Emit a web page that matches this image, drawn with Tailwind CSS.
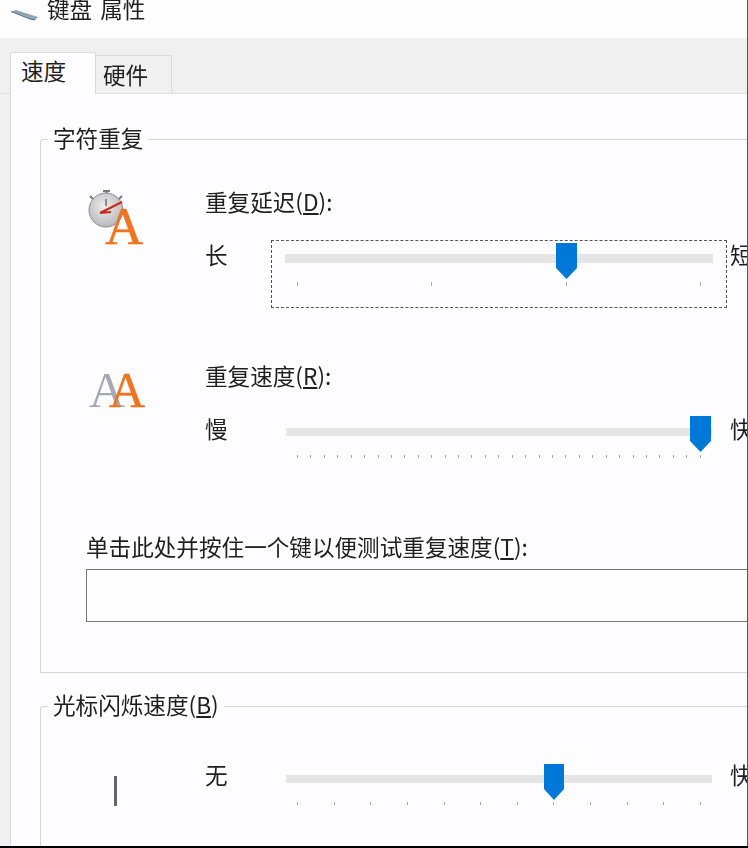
<!DOCTYPE html>
<html lang="zh-CN">
<head>
<meta charset="UTF-8">
<title>键盘 属性</title>
<script src="https://cdn.jsdelivr.net/npm/@tailwindcss/browser@4"></script>
</head>
<body class="bg-[#fdfcfe] text-[#1f1f1f] font-['Noto_Sans_CJK_SC','Noto_Sans',sans-serif] text-[22.6px]">
<div class="flex flex-col w-[748px] h-[848px] overflow-hidden">
 <div class="flex-1 min-h-0 flex blur-[0.4px]">
  <div class="flex-1 min-w-0 flex flex-col">

  <!-- Title bar -->
  <div class="h-[38px] shrink-0 flex items-start bg-[#fdfdfd] pl-[11px]">
    <svg class="mt-[9px]" width="27" height="12" viewBox="0 0 27 12">
      <path d="M0 2.5 L5 1 L27 8 L24 11 L19 10 Z" fill="#8fa6b8"/>
      <path d="M0 2.5 L19 10 L24 11" fill="none" stroke="#5f6f7c" stroke-width="1"/>
    </svg>
    <span class="ml-[9px] -mt-[6px] leading-[30px] [word-spacing:3px]">键盘 属性</span>
  </div>

  <!-- Tabs -->
  <div class="h-[56px] shrink-0 bg-[#f0f0f0] flex items-end pl-[10px] border-b border-[#dfdfdf]">
    <div class="w-[86px] h-[42px] -mb-px bg-[#fdfcfe] border border-b-0 border-[#dcdcdc] rounded-t-[2px] pl-[10px] leading-[36px] z-10">速度</div>
    <div class="w-[76px] h-[38px] bg-[#f0f0f0] border border-l-0 border-b-0 border-[#d9d9d9] rounded-tr-[2px] pl-[7px] leading-[38px]">硬件</div>
  </div>

  <div class="flex-1 flex min-h-0">
    <div class="w-[10px] bg-[#f0f0f0]"></div>

    <!-- Panel -->
    <div class="flex-1 min-w-0 overflow-hidden bg-[#fdfcfe] border-l border-[#dcdcdc] pl-[29px] pt-[45px]">

      <!-- Group: 字符重复 -->
      <div class="relative w-[760px] h-[534px] border border-r-0 border-[#d5d5d5] rounded-tl-[4px] pt-[49px]">
        <span class="absolute left-[7px] -top-[17px] px-[5px] bg-[#fdfcfe] leading-[30px]">字符重复</span>

        <div class="flex">
          <div class="w-[164px] shrink-0 pl-[46px]">
            <svg width="60" height="60" viewBox="0 0 60 60">
              <defs>
                <radialGradient id="dial" cx="45%" cy="40%" r="65%">
                  <stop offset="0" stop-color="#eeeeee"/>
                  <stop offset="1" stop-color="#b4b4b8"/>
                </radialGradient>
              </defs>
              <path d="M16 2 h7 M19.5 2 v3 M3 7 l4 4 M35 7 l-4 4" stroke="#77797e" stroke-width="2" fill="none"/>
              <circle cx="19" cy="21" r="17" fill="url(#dial)" stroke="#8c8d92" stroke-width="1"/>
              <path d="M13 24 L35 13 M13 24 L24 23" stroke="#c8281e" stroke-width="2" fill="none"/>
              <path d="M19 10 v7" stroke="#6b6b70" stroke-width="1.5"/>
              <text x="18" y="55" font-family="Liberation Serif" font-size="53" fill="#ee7420" stroke="#ee7420" stroke-width="0.5">A</text>
            </svg>
          </div>
          <div>
            <div class="h-[24px] leading-[26px]">重复延迟(<u>D</u>):</div>
            <div class="flex mt-[27px]">
              <div class="w-[66px] h-[28px] leading-[30px]">长</div>
              <div class="relative w-[456px] h-[68px] border border-dashed border-[#555] pt-[13px] px-[13px]">
                <div class="h-[9px] bg-[#e5e5e7]"></div>
                <div class="flex justify-between px-[12px] mt-[19px]">
                  <i class="w-px h-[4px] bg-[#aaa]"></i><i class="w-px h-[4px] bg-[#aaa]"></i><i class="w-px h-[4px] bg-[#aaa]"></i><i class="w-px h-[4px] bg-[#aaa]"></i>
                </div>
                <svg class="absolute left-[284px] top-[2px]" width="21" height="36" viewBox="0 0 21 36"><path d="M0 0 H21 V25 L10.5 36 L0 25 Z" fill="#0078d7"/></svg>
              </div>
              <div class="ml-[3px] h-[28px] leading-[30px]">短</div>
            </div>
          </div>
        </div>

        <div class="flex mt-[55px]">
          <div class="w-[164px] shrink-0 pl-[46px]">
            <svg class="mt-[3px]" width="60" height="44" viewBox="0 0 60 44">
              <text x="2" y="41" font-family="Liberation Serif" font-size="50" fill="#a8a9b6">A</text>
              <text x="22" y="41" font-family="Liberation Serif" font-size="50" fill="#ee7420" stroke="#ee7420" stroke-width="0.5">A</text>
            </svg>
          </div>
          <div>
            <div class="h-[24px] leading-[26px]">重复速度(<u>R</u>):</div>
            <div class="flex mt-[27px]">
              <div class="w-[66px] h-[28px] leading-[30px]">慢</div>
              <div class="relative w-[456px] h-[68px] pt-[14px] px-[15px]">
                <div class="h-[8px] bg-[#e5e5e7]"></div>
                <div class="flex justify-between px-[11px] mt-[19px]">
                  <i class="w-px h-[3px] bg-[#aaa]"></i><i class="w-px h-[3px] bg-[#aaa]"></i><i class="w-px h-[3px] bg-[#aaa]"></i><i class="w-px h-[3px] bg-[#aaa]"></i><i class="w-px h-[3px] bg-[#aaa]"></i><i class="w-px h-[3px] bg-[#aaa]"></i><i class="w-px h-[3px] bg-[#aaa]"></i><i class="w-px h-[3px] bg-[#aaa]"></i><i class="w-px h-[3px] bg-[#aaa]"></i><i class="w-px h-[3px] bg-[#aaa]"></i><i class="w-px h-[3px] bg-[#aaa]"></i><i class="w-px h-[3px] bg-[#aaa]"></i><i class="w-px h-[3px] bg-[#aaa]"></i><i class="w-px h-[3px] bg-[#aaa]"></i><i class="w-px h-[3px] bg-[#aaa]"></i><i class="w-px h-[3px] bg-[#aaa]"></i><i class="w-px h-[3px] bg-[#aaa]"></i><i class="w-px h-[3px] bg-[#aaa]"></i><i class="w-px h-[3px] bg-[#aaa]"></i><i class="w-px h-[3px] bg-[#aaa]"></i><i class="w-px h-[3px] bg-[#aaa]"></i><i class="w-px h-[3px] bg-[#aaa]"></i><i class="w-px h-[3px] bg-[#aaa]"></i><i class="w-px h-[3px] bg-[#aaa]"></i><i class="w-px h-[3px] bg-[#aaa]"></i><i class="w-px h-[3px] bg-[#aaa]"></i><i class="w-px h-[3px] bg-[#aaa]"></i><i class="w-px h-[3px] bg-[#aaa]"></i><i class="w-px h-[3px] bg-[#aaa]"></i><i class="w-px h-[3px] bg-[#aaa]"></i><i class="w-px h-[3px] bg-[#aaa]"></i>
                </div>
                <svg class="absolute left-[419px] top-[2px]" width="21" height="36" viewBox="0 0 21 36"><path d="M0 0 H21 V25 L10.5 36 L0 25 Z" fill="#0078d7"/></svg>
              </div>
              <div class="ml-[3px] h-[28px] leading-[30px]">快</div>
            </div>
          </div>
        </div>

        <div class="ml-[45px] mt-[52px] h-[24px] leading-[26px]">单击此处并按住一个键以便测试重复速度(<u>T</u>):</div>
        <div class="ml-[45px] mt-[11px] h-[53px] border border-[#777] bg-[#fefefe]"></div>
      </div>

      <!-- Group: 光标闪烁速度 -->
      <div class="relative w-[760px] h-[200px] mt-[33px] border-l border-t border-[#d5d5d5] rounded-tl-[4px] pt-[54px]">
        <span class="absolute left-[7px] -top-[17px] px-[5px] bg-[#fdfcfe] leading-[30px]">光标闪烁速度(<u>B</u>)</span>
        <div class="flex">
          <div class="w-[164px] shrink-0 pl-[73px] pt-[15px]">
            <div class="w-[3px] h-[30px] bg-[#666]"></div>
          </div>
          <div class="w-[66px] h-[26px] leading-[28px]">无</div>
          <div class="relative w-[456px] h-[60px] pt-[14px] px-[15px]">
            <div class="h-[8px] bg-[#e5e5e7]"></div>
            <div class="flex justify-between px-[11px] mt-[19px]">
              <i class="w-px h-[3px] bg-[#aaa]"></i><i class="w-px h-[3px] bg-[#aaa]"></i><i class="w-px h-[3px] bg-[#aaa]"></i><i class="w-px h-[3px] bg-[#aaa]"></i><i class="w-px h-[3px] bg-[#aaa]"></i><i class="w-px h-[3px] bg-[#aaa]"></i><i class="w-px h-[3px] bg-[#aaa]"></i><i class="w-px h-[3px] bg-[#aaa]"></i><i class="w-px h-[3px] bg-[#aaa]"></i><i class="w-px h-[3px] bg-[#aaa]"></i><i class="w-px h-[3px] bg-[#aaa]"></i><i class="w-px h-[3px] bg-[#aaa]"></i>
            </div>
            <svg class="absolute left-[273px] top-[3px]" width="20" height="36" viewBox="0 0 20 36"><path d="M0 0 H20 V25 L10 36 L0 25 Z" fill="#0078d7"/></svg>
          </div>
          <div class="ml-[3px] h-[26px] leading-[28px]">快</div>
        </div>
      </div>
    </div>
  </div>
  </div>
  <div class="w-px shrink-0 bg-[#555]"></div>
 </div>
 <div class="h-[2px] shrink-0 bg-black"></div>
</div>
</body>
</html>
